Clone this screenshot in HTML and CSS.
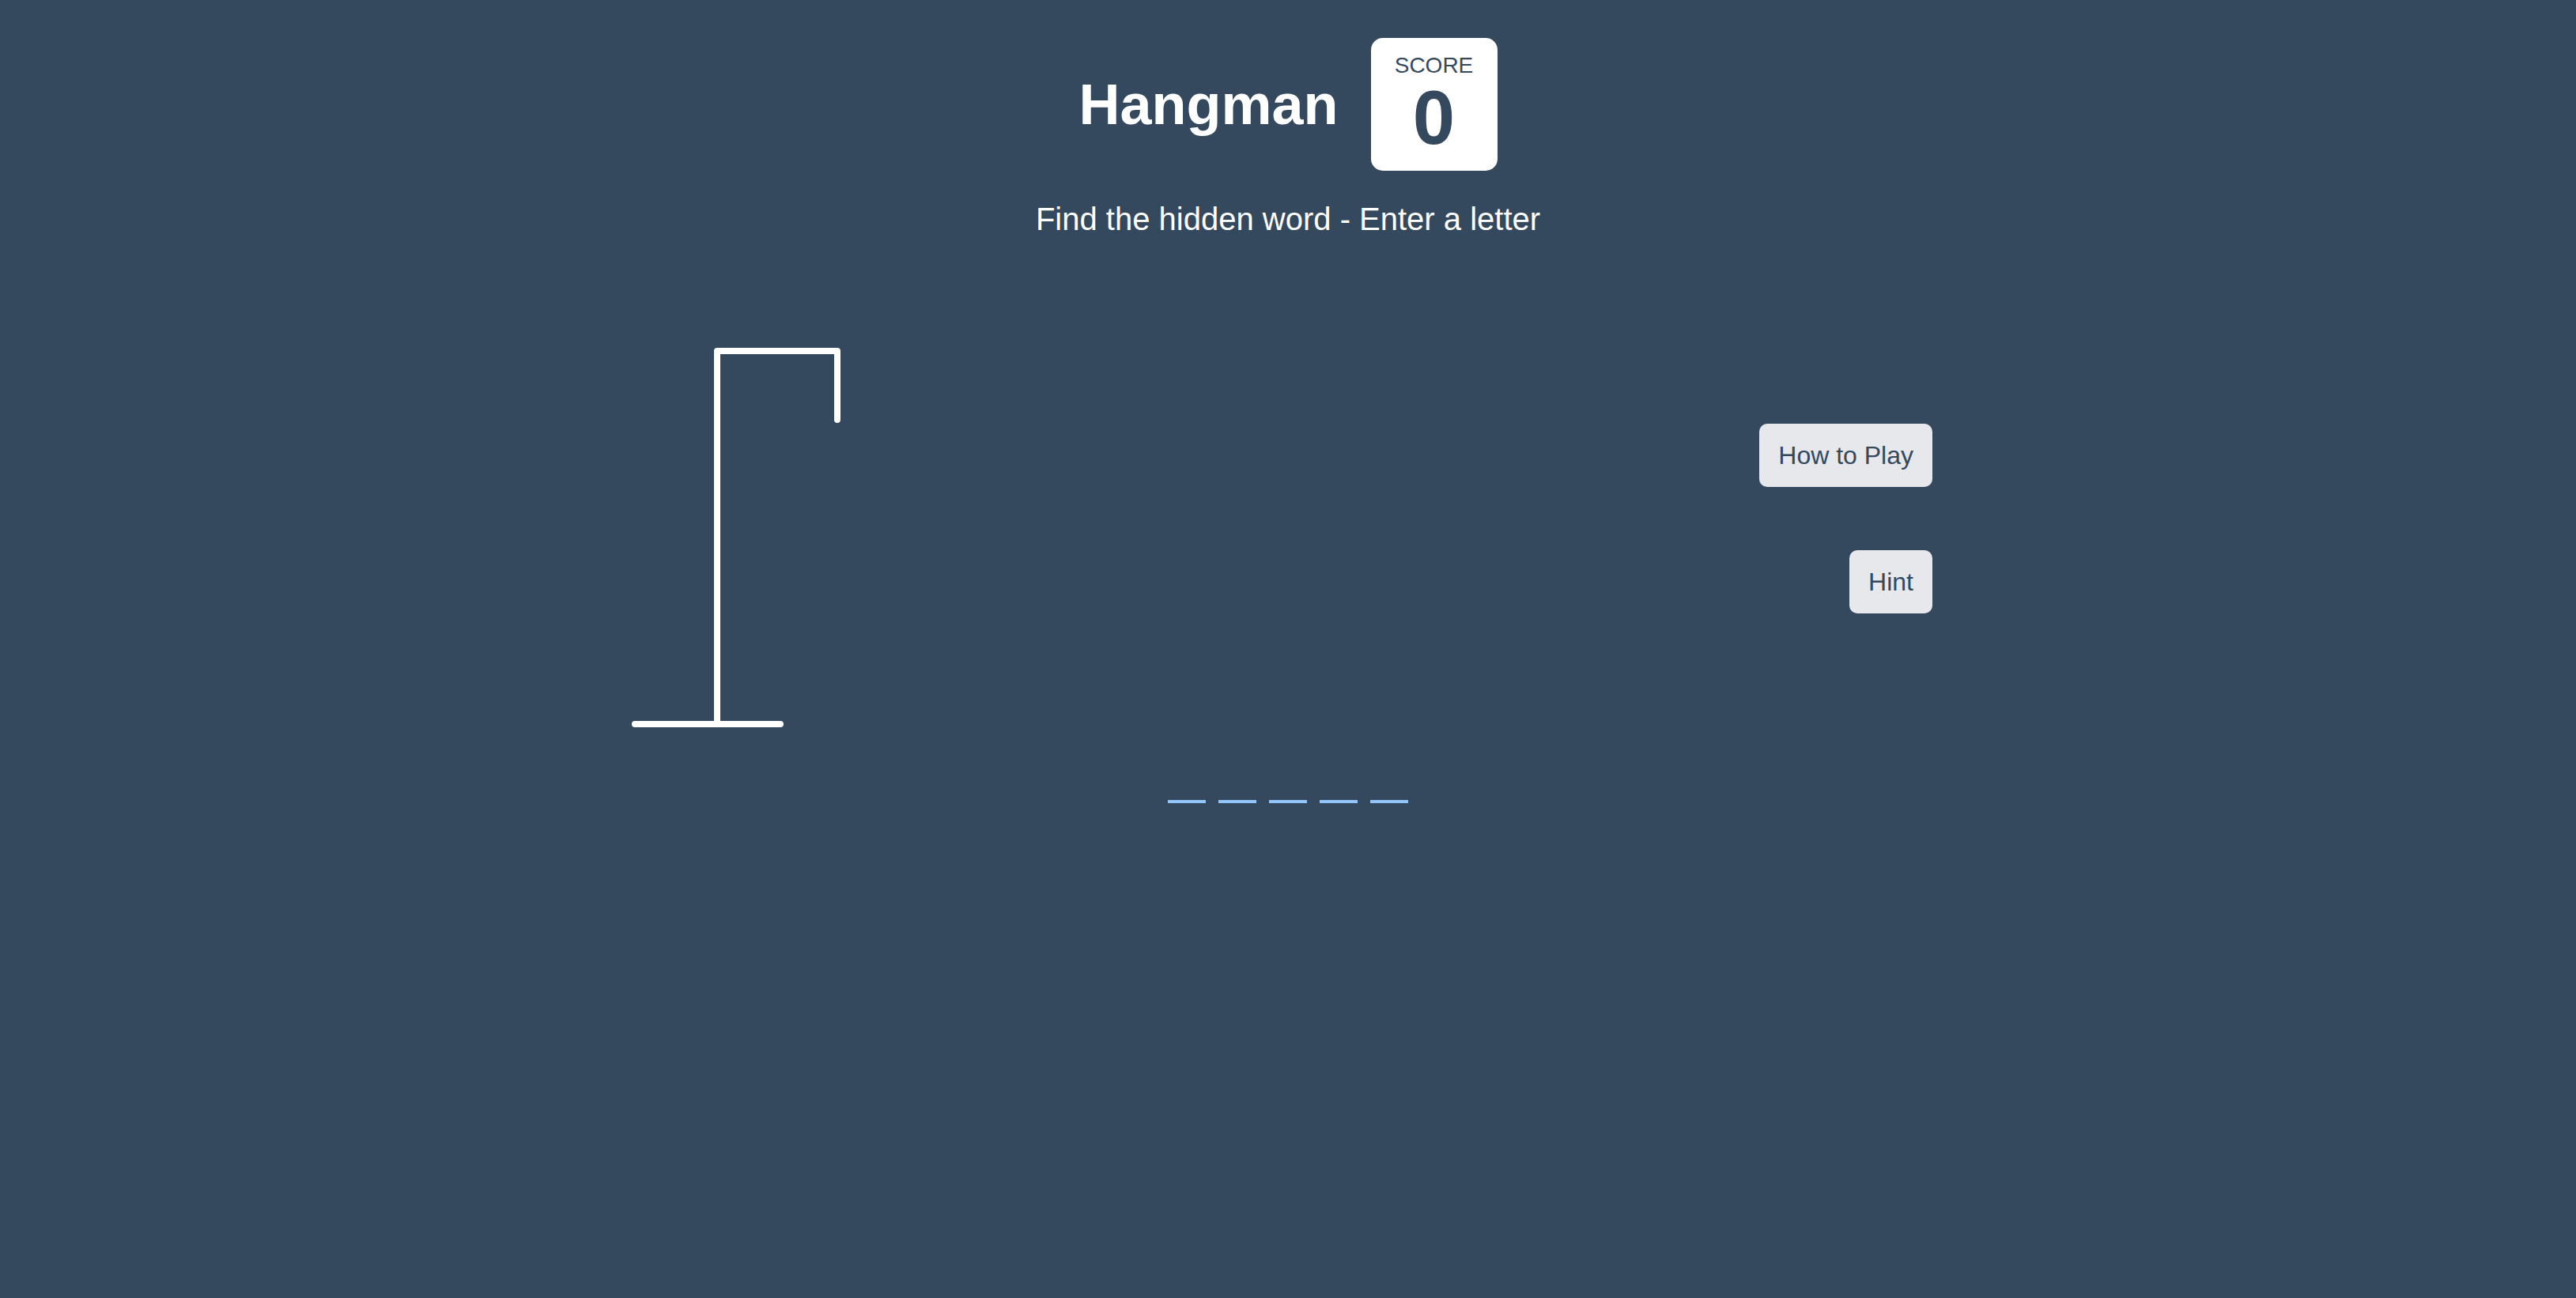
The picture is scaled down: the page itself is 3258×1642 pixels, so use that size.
FILE: index.html
```html
<!DOCTYPE html>
<html lang="en">
<head>
<meta charset="utf-8">
<title>Hangman</title>
<link rel="stylesheet" href="styles.css">
</head>
<body>
<header class="header">
  <div class="title-row">
    <h1 class="title">Hangman</h1>
    <div class="score">
      <div class="score-label">SCORE</div>
      <div class="score-value">0</div>
    </div>
  </div>
  <p class="subtitle">Find the hidden word - Enter a letter</p>
</header>
<main class="stage">
  <svg class="gallows" width="300" height="500" viewBox="0 0 300 500" aria-hidden="true">
    <line x1="23" y1="496" x2="207" y2="496" />
    <path d="M127 496 V24 H279 V111" />
  </svg>
  <div class="actions">
    <button class="btn" type="button">How to Play</button>
    <button class="btn" type="button">Hint</button>
  </div>
</main>
<div class="word">
  <span class="blank"></span>
  <span class="blank"></span>
  <span class="blank"></span>
  <span class="blank"></span>
  <span class="blank"></span>
</div>
</body>
</html>
```
FILE: styles.css
```css
html, body {
  margin: 0;
  padding: 0;
}
body {
  background: #34495e;
  font-family: "Liberation Sans", Arial, sans-serif;
  color: #ffffff;
  min-height: 100vh;
}
.header {
  padding-top: 48px;
  display: flex;
  flex-direction: column;
  align-items: center;
}
.title-row {
  display: flex;
  align-items: center;
  gap: 41px;
}
.title {
  margin: 0;
  font-size: 72px;
  font-weight: 700;
  line-height: normal;
  color: #ffffff;
}
.score {
  background: #ffffff;
  border-radius: 15px;
  width: 160px;
  height: 168px;
  box-sizing: border-box;
  padding-top: 19px;
  display: flex;
  flex-direction: column;
  align-items: center;
  color: #34495e;
}
.score-label {
  font-size: 28px;
  line-height: 32px;
}
.score-value {
  font-size: 96px;
  font-weight: 700;
  line-height: 100px;
}
.subtitle {
  margin: 38px 0 0;
  font-size: 40px;
  line-height: 46px;
}
.stage {
  width: 1630px;
  margin: 120px auto 0;
  display: flex;
  justify-content: space-between;
  align-items: flex-start;
}
.gallows {
  display: block;
  margin-left: -34px;
  fill: none;
  stroke: #ffffff;
  stroke-width: 8;
  stroke-linecap: round;
  stroke-linejoin: round;
}
.actions {
  margin-top: 116px;
  display: flex;
  flex-direction: column;
  align-items: flex-end;
  gap: 80px;
}
.btn {
  font-family: "Liberation Sans", Arial, sans-serif;
  font-size: 32px;
  line-height: 38px;
  padding: 21px 24px;
  border: none;
  border-radius: 10px;
  background: #e6e8ec;
  color: #34495e;
  cursor: pointer;
}
.word {
  margin-top: 92px;
  display: flex;
  justify-content: center;
  gap: 16px;
}
.blank {
  width: 48px;
  height: 4px;
  background: #93c5fd;
}
```
